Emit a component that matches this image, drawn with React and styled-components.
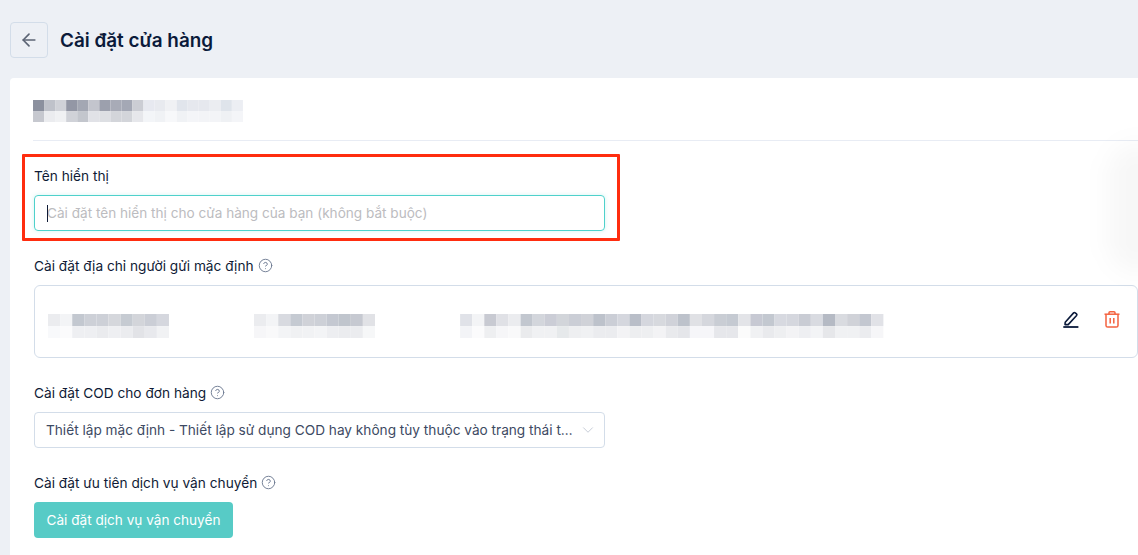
import React from 'react';
import styled, { createGlobalStyle } from 'styled-components';
import { ArrowLeft, CircleHelp, ChevronDown } from 'lucide-react';

const GlobalStyle = createGlobalStyle`
  html, body {
    margin: 0;
    height: 100%;
    overflow: hidden;
    background: #edf0f5;
    font-family: Inter, "Noto Sans", sans-serif;
    color: #0f1b36;
  }
  * { box-sizing: border-box; }
`;

const nameRows = [
  ['#8b909e', '#bfc2ca', '#d0d2d8', '#9397a5', '#a3a7b3', '#c3c5cd', '#9ca0ad', '#a8abb7', '#a4a8b5', '#cbcdd4', '#e7e9f0', '#e8eaef', '#f0f1f4', '#e1e5ec', '#e6e8ee', '#e6e8ee', '#ebedf1', '#dfe4eb', '#eceef3'],
  ['#c6c8cf', '#ebecef', '#f0f1f3', '#d0d2d8', '#c3c6cd', '#e1e2e7', '#dddfe3', '#d3d5da', '#d3d5da', '#e6e7eb', '#f3f5f8', '#f0f2f5', '#f7f8fa', '#f0f2f5', '#f4f5f8', '#f3f4f7', '#f3f4f7', '#eff1f4', '#f4f5f8'],
];
const senderRows = [
  ['#ebecef', '#f3f4f6', '#c3c8d0', '#cdd0d7', '#cdd0d7', '#d5d7dc', '#c6cbd2', '#d3d5da', '#cbced6', '#d5d7de'],
  ['#f8f9fb', '#fbfbfc', '#eeeff2', '#eeeff2', '#eaebee', '#eeeff2', '#ebecef', '#e2e3e7', '#e8e9ed', '#f1f2f4'],
];
const phoneRows = [
  ['#ebecef', '#f3f4f6', '#d8dae0', '#c5cad2', '#d0d2d8', '#cdd0d7', '#c4c8d1', '#c0c5cd', '#c6c9d1', '#e1e2e6'],
  ['#f6f6f8', '#f9f9fa', '#f3f4f6', '#f0f1f3', '#f1f2f4', '#f3f4f6', '#edeef1', '#ebecef', '#ebecef', '#f6f7f8'],
];
const addressRows = [
  ['#e0e2e8', '#f3f4f6', '#c8cad2', '#e0e1e6', '#ebecef', '#c2c7cf', '#d3d6dc', '#cbcdd6', '#d2d5da', '#cbced6', '#d0d2d8', '#bdc2cb', '#cbced6', '#d5d7de', '#b9bec8', '#d5d7de', '#d7d9de', '#d0d2d9', '#bdc2cb', '#e0e1e5', '#d5d7dd', '#c9cdd4', '#c5cad2', '#e3e4e8', '#c7c9d3', '#c3c8d0', '#d7d9e0', '#d5d7de', '#c9ccd4', '#d9dbe1', '#b5bac4', '#d9dbe0', '#d0d2d8', '#c3c7d0', '#e1e2e7'],
  ['#f3f4f7', '#fbfbfc', '#eeeff1', '#f6f6f8', '#f9f9fa', '#eaebed', '#f0f1f3', '#f0f1f3', '#e6e9eb', '#eeeff1', '#f0f1f3', '#ebecef', '#ebecef', '#f3f3f5', '#edeef0', '#eeeff1', '#f3f3f5', '#e9eaed', '#e5e6ea', '#f6f6f9', '#f6f6f9', '#e6e7eb', '#e6e7eb', '#fbfbfb', '#f0f1f3', '#e9eaed', '#eeeff1', '#f3f3f5', '#eeeff2', '#f3f4f6', '#e6e7ea', '#f0f1f3', '#f0f1f3', '#ebecef', '#f6f6f8'],
];

function Mosaic({ rows, cell }) {
  const width = rows[0].length * cell;
  return (
    <MosaicSvg width={width} height={rows.length * cell} viewBox={`0 0 ${width} ${rows.length * cell}`}>
      {rows.map((row, y) =>
        row.map((color, x) => (
          <rect key={`${x}-${y}`} x={x * cell} y={y * cell} width={cell} height={cell} fill={color} />
        ))
      )}
    </MosaicSvg>
  );
}

function PencilIcon() {
  return (
    <svg width="16" height="17" viewBox="0 0 16 17" fill="none" stroke="#0b1a3a" strokeWidth="1.6">
      <path d="M2.2 11.2 L10.6 1.9 C11.1 1.4 11.7 1.4 12.2 1.8 L13.5 2.9 C14 3.4 14 4 13.6 4.5 L5.2 13.6 H2 Z" strokeLinejoin="round" />
      <path d="M0.3 16 H15.4" strokeWidth="1.8" />
    </svg>
  );
}

function TrashIcon() {
  return (
    <svg width="16" height="17" viewBox="0 0 16 17" fill="none" stroke="#f4623f" strokeWidth="1.5">
      <path d="M0.5 3.2 H15.5" />
      <path d="M5 3.2 V1.7 C5 1.1 5.4 0.8 6 0.8 H10 C10.6 0.8 11 1.1 11 1.7 V3.2" />
      <path d="M2 3.2 V14.4 C2 15.4 2.7 16 3.7 16 H12.3 C13.3 16 14 15.4 14 14.4 V3.2" />
      <path d="M6.2 7 V12.4" />
      <path d="M9.8 7 V12.4" />
    </svg>
  );
}

export default function App() {
  return (
    <Page>
      <GlobalStyle />
      <Header>
        <BackButton>
          <ArrowLeft size={20} strokeWidth={2} />
        </BackButton>
        <Title>Cài đặt cửa hàng</Title>
      </Header>
      <Card>
        <ShopRow>
          <Mosaic rows={nameRows} cell={11.05} />
        </ShopRow>
        <Highlight>
          <Label>Tên hiển thị</Label>
          <NameInput>
            <Caret />
            Cài đặt tên hiển thị cho cửa hàng của bạn (không bắt buộc)
          </NameInput>
        </Highlight>
        <Section $top={17}>
          <Label>
            Cài đặt địa chỉ người gửi mặc định
            <CircleHelp size={15} color="#6d7a91" strokeWidth={1.5} />
          </Label>
          <AddressBox>
            <AddressText>
              <Mosaic rows={senderRows} cell={12.1} />
              <Mosaic rows={phoneRows} cell={12.1} />
              <Mosaic rows={addressRows} cell={12.1} />
            </AddressText>
            <AddressActions>
              <PencilIcon />
              <TrashIcon />
            </AddressActions>
          </AddressBox>
        </Section>
        <Section $top={27}>
          <Label>
            Cài đặt COD cho đơn hàng
            <CircleHelp size={15} color="#6d7a91" strokeWidth={1.5} />
          </Label>
          <SelectBox>
            <SelectValue>Thiết lập mặc định - Thiết lập sử dụng COD hay không tùy thuộc vào trạng thái t…</SelectValue>
            <ChevronDown size={18} color="#b4bcc9" strokeWidth={1} />
          </SelectBox>
        </Section>
        <Section $top={27}>
          <Label>
            Cài đặt ưu tiên dịch vụ vận chuyển
            <CircleHelp size={15} color="#6d7a91" strokeWidth={1.5} />
          </Label>
          <ShippingButton>Cài đặt dịch vụ vận chuyển</ShippingButton>
        </Section>
        <EdgeShadow />
      </Card>
    </Page>
  );
}

const Page = styled.div`
  display: flex;
  flex-direction: column;
  height: 555px;
  width: 1138px;
  overflow: hidden;
  padding: 22px 0 0 10px;
`;

const Header = styled.div`
  display: flex;
  align-items: center;
  gap: 12px;
  height: 36px;
  margin-bottom: 20px;
`;

const BackButton = styled.div`
  display: flex;
  align-items: center;
  justify-content: center;
  width: 38px;
  height: 36px;
  border: 1px solid #d3dde9;
  border-radius: 4px;
  color: #5c6474;
`;

const Title = styled.h1`
  margin: 0;
  font-size: 18.9px;
  font-weight: 600;
  color: #0b1a3a;
`;

const Card = styled.div`
  position: relative;
  flex: 1;
  display: flex;
  flex-direction: column;
  background: #fff;
  border-radius: 4px 0 0 0;
  padding: 0 0 0 12px;
  overflow: hidden;
`;

const ShopRow = styled.div`
  height: 63px;
  margin-left: 11px;
  padding: 22px 0 0 0;
  border-bottom: 1px solid #e8ecf4;
`;

const MosaicSvg = styled.svg`
  display: block;
  flex-shrink: 0;
`;

const Highlight = styled.div`
  display: flex;
  flex-direction: column;
  width: 598px;
  height: 87px;
  margin-top: 13px;
  padding: 11px 12px 0 9px;
  border: 3px solid #ff2d0f;
  border-radius: 1px;
`;

const Label = styled.label`
  display: flex;
  align-items: center;
  gap: 4px;
  height: 17px;
  padding-bottom: 2px;
  margin-bottom: 10px;
  font-size: 13.7px;
  color: #0f1b36;
`;

const NameInput = styled.div`
  position: relative;
  display: flex;
  align-items: center;
  height: 36px;
  padding-left: 12px;
  border: 1px solid #4fd1cb;
  border-radius: 4px;
  box-shadow: 0 0 4px rgba(79, 209, 203, 0.25);
  font-size: 13.6px;
  color: #bcbcc0;
`;

const Caret = styled.span`
  position: absolute;
  left: 12px;
  top: 9px;
  width: 1px;
  height: 17px;
  background: #0f1b36;
`;

const Section = styled.div`
  display: flex;
  flex-direction: column;
  margin-top: ${({ $top }) => $top}px;
  margin-left: 12px;
`;

const AddressBox = styled.div`
  display: flex;
  align-items: center;
  justify-content: space-between;
  height: 73px;
  padding: 0 17px 0 13px;
  border: 1px solid #d3dde9;
  border-radius: 6px;
`;

const AddressText = styled.div`
  display: flex;
  gap: 85px;
  padding-top: 9px;
`;

const AddressActions = styled.div`
  display: flex;
  align-items: center;
  gap: 25px;
  padding-bottom: 4px;
`;

const SelectBox = styled.div`
  display: flex;
  align-items: center;
  justify-content: space-between;
  width: 571px;
  height: 36px;
  padding: 0 7px 0 11px;
  border: 1px solid #d3dde9;
  border-radius: 4px;
`;

const SelectValue = styled.span`
  white-space: nowrap;
  font-size: 13.65px;
  color: #3d4a63;
`;

const ShippingButton = styled.button`
  width: 199px;
  height: 36px;
  padding: 0;
  border: none;
  border-radius: 4px;
  background: #57cbc6;
  font-family: inherit;
  font-size: 13.6px;
  color: #fff;
`;

const EdgeShadow = styled.div`
  position: absolute;
  right: -30px;
  top: 65px;
  width: 60px;
  height: 130px;
  border-radius: 30px;
  background: rgba(0, 0, 0, 0.03);
  filter: blur(12px);
`;
